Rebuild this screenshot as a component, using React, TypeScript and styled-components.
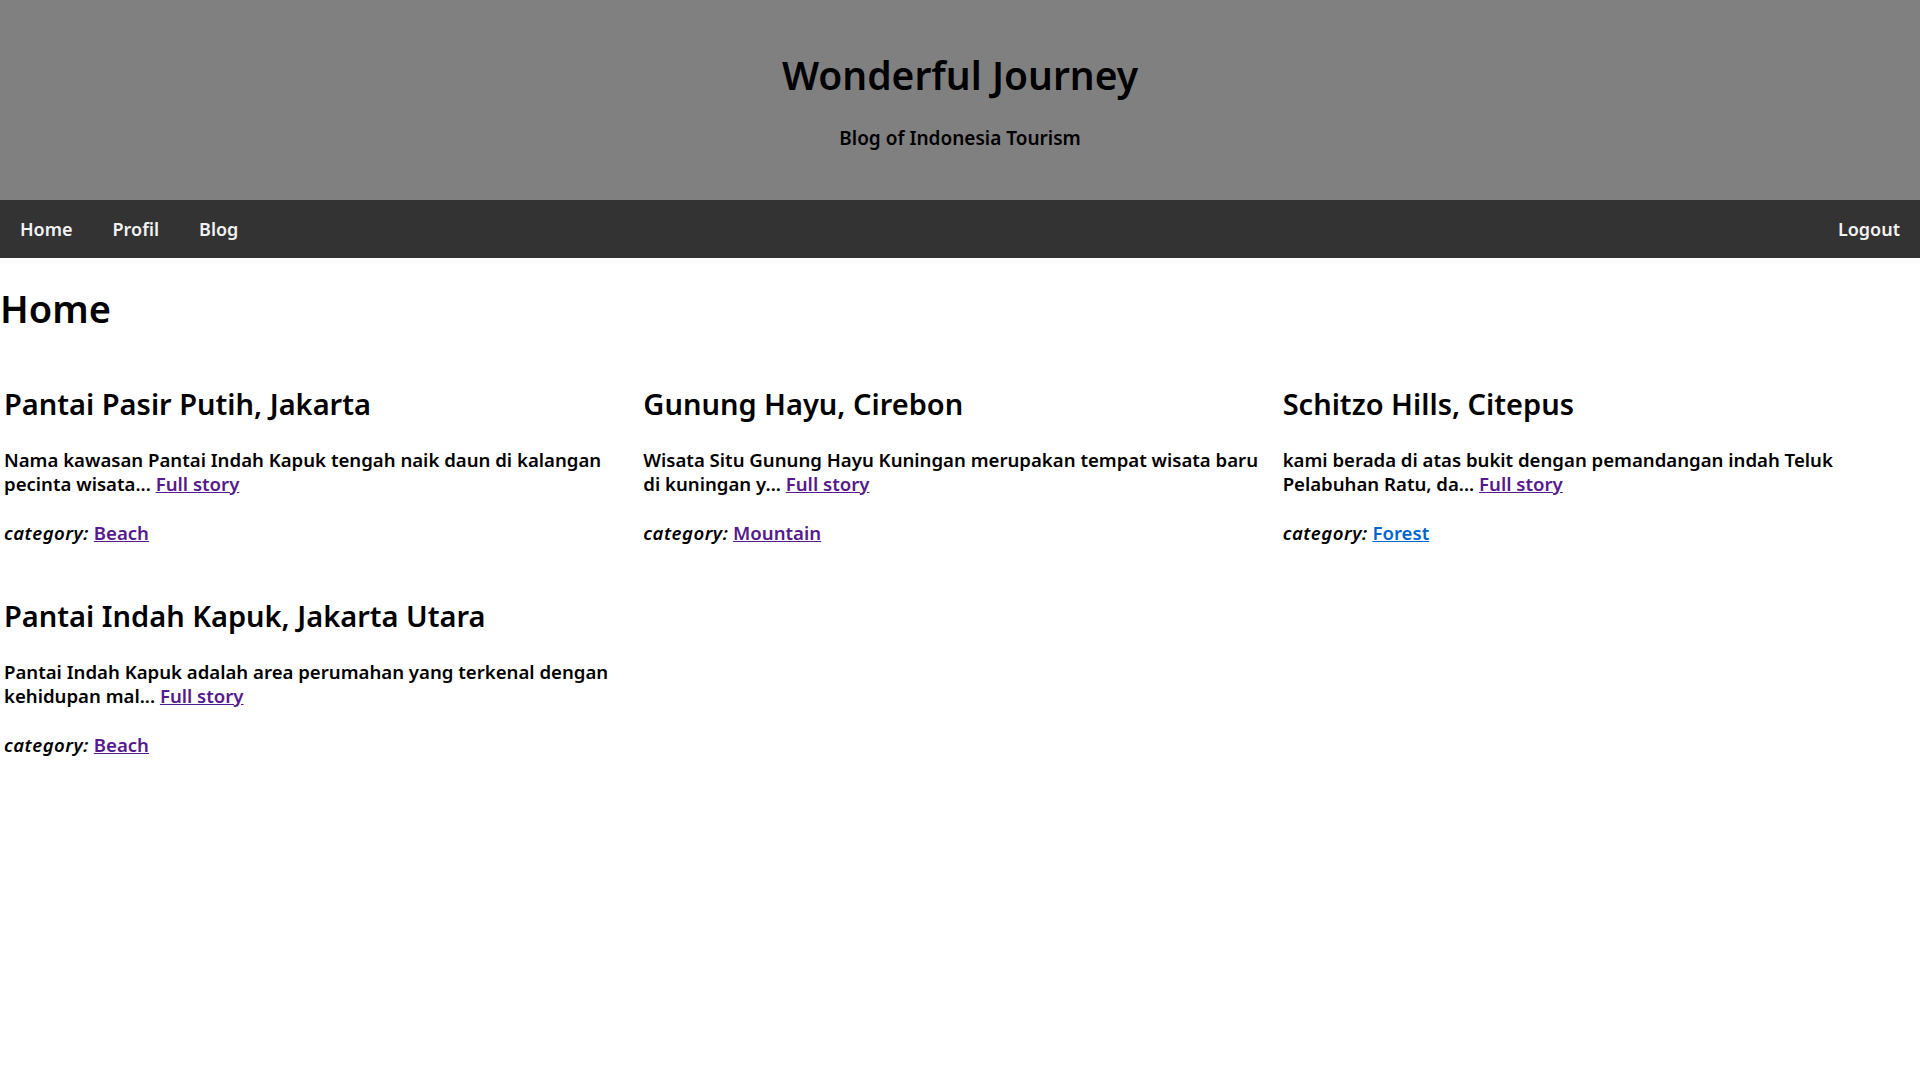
import React from "react";
import styled, { createGlobalStyle } from "styled-components";

interface Post {
  title: string;
  excerpt: string;
  category: string;
  visited: boolean;
}

const posts: Post[] = [
  {
    title: "Pantai Pasir Putih, Jakarta",
    excerpt: "Nama kawasan Pantai Indah Kapuk tengah naik daun di kalangan pecinta wisata...",
    category: "Beach",
    visited: true,
  },
  {
    title: "Gunung Hayu, Cirebon",
    excerpt: "Wisata Situ Gunung Hayu Kuningan merupakan tempat wisata baru di kuningan y...",
    category: "Mountain",
    visited: true,
  },
  {
    title: "Schitzo Hills, Citepus",
    excerpt: "kami berada di atas bukit dengan pemandangan indah Teluk Pelabuhan Ratu, da...",
    category: "Forest",
    visited: false,
  },
  {
    title: "Pantai Indah Kapuk, Jakarta Utara",
    excerpt: "Pantai Indah Kapuk adalah area perumahan yang terkenal dengan kehidupan mal...",
    category: "Beach",
    visited: true,
  },
];

const GlobalStyle = createGlobalStyle`
  body {
    margin: 0;
    background: #ffffff;
    color: #000000;
    font-family: "Noto Sans", "Open Sans", sans-serif;
    font-weight: 600;
  }
`;

const Header = styled.header`
  height: 200px;
  box-sizing: border-box;
  padding-top: 51px;
  background-color: #808080;
  text-align: center;
`;

const SiteTitle = styled.h1`
  margin: 0 0 27px;
  font-size: 39px;
  line-height: 48px;
  font-weight: 600;
`;

const Tagline = styled.p`
  margin: 0;
  font-size: 19px;
  line-height: 24px;
`;

const NavBar = styled.nav`
  display: flex;
  background-color: #333333;
`;

const NavLink = styled.a<{ $right?: boolean }>`
  display: block;
  padding: 18px 20px;
  margin-left: ${(p) => (p.$right ? "auto" : "0")};
  font-size: 18px;
  line-height: 22px;
  color: #f2f2f2;
  text-decoration: none;
`;

const Main = styled.main`
  padding-top: 26px;
`;

const PageTitle = styled.h2`
  margin: 0 0 54px;
  font-size: 38px;
  line-height: 48px;
  font-weight: 600;
`;

const PostGrid = styled.div`
  display: grid;
  grid-template-columns: repeat(3, 1fr);
  column-gap: 2px;
  row-gap: 53px;
  padding-left: 4px;
`;

const Card = styled.article`
  min-width: 0;
  padding-right: 10px;
`;

const CardTitle = styled.h3`
  margin: 0 0 26px;
  font-size: 29px;
  line-height: 36px;
  font-weight: 600;
`;

const BodyText = styled.p<{ $gap?: number }>`
  margin: 0 0 ${(p) => p.$gap ?? 0}px;
  font-size: 18.6px;
  line-height: 24px;
`;

const Label = styled.em`
  font-style: italic;
  letter-spacing: 0.5px;
`;

const Link = styled.a<{ $visited?: boolean }>`
  color: ${(p) => (p.$visited ? "#551a8b" : "#0066cc")};
  text-decoration: underline;
`;

export default function App() {
  return (
    <>
      <GlobalStyle />
      <Header>
        <SiteTitle>Wonderful Journey</SiteTitle>
        <Tagline>Blog of Indonesia Tourism</Tagline>
      </Header>
      <NavBar>
        <NavLink href="#">Home</NavLink>
        <NavLink href="#">Profil</NavLink>
        <NavLink href="#">Blog</NavLink>
        <NavLink href="#" $right>
          Logout
        </NavLink>
      </NavBar>
      <Main>
        <PageTitle>Home</PageTitle>
        <PostGrid>
          {posts.map((post) => (
            <Card key={post.title}>
              <CardTitle>{post.title}</CardTitle>
              <BodyText $gap={25}>
                {post.excerpt} <Link href="#" $visited>Full story</Link>
              </BodyText>
              <BodyText>
                <Label>category:</Label>{" "}
                <Link href="#" $visited={post.visited}>
                  {post.category}
                </Link>
              </BodyText>
            </Card>
          ))}
        </PostGrid>
      </Main>
    </>
  );
}
